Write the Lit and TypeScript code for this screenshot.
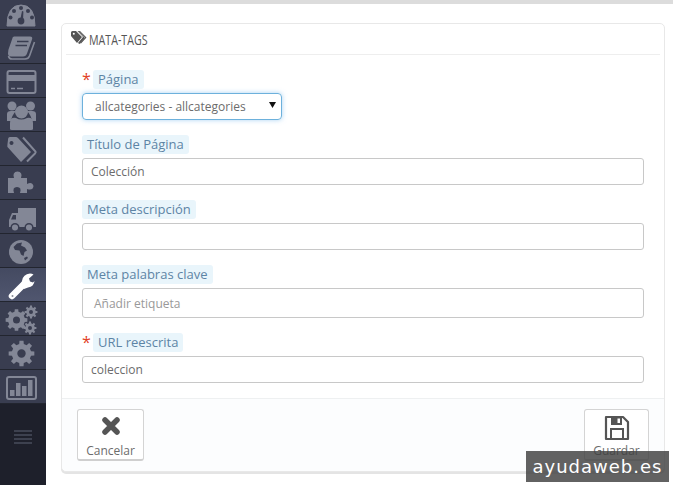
import { LitElement, html, css, svg, nothing } from "lit";
import { customElement } from "lit/decorators.js";

const IC = "#838796";
const BG = "#393d50";

function gear(cx: number, cy: number, ro: number, ri: number, hole: number, teeth = 8) {
  let d = "";
  const step = (Math.PI * 2) / teeth;
  for (let i = 0; i < teeth; i++) {
    const a = i * step - Math.PI / 2;
    const w1 = step * 0.2;
    const w2 = step * 0.3;
    const pts = [
      [ri, a - w2],
      [ro, a - w1],
      [ro, a + w1],
      [ri, a + w2],
    ];
    for (const [r, t] of pts) {
      d += `${d ? "L" : "M"}${(cx + r * Math.cos(t)).toFixed(2)} ${(cy + r * Math.sin(t)).toFixed(2)}`;
    }
  }
  d += "Z";
  d += `M${cx - hole} ${cy}a${hole} ${hole} 0 1 0 ${hole * 2} 0a${hole} ${hole} 0 1 0 ${-hole * 2} 0Z`;
  return d;
}

const icons = [
  svg`<path fill=${IC} d="M7 26Q7 5 21 5T35 26Z" stroke=${IC} stroke-linejoin="round"/>
    <g fill=${BG}><circle cx="14" cy="11" r="2"/><circle cx="21" cy="8" r="2"/><circle cx="28" cy="11" r="2"/><circle cx="10.5" cy="17.5" r="2"/><circle cx="32" cy="17.5" r="2"/><circle cx="21" cy="21" r="3.4"/><path d="M20 21L22 11L23.4 11.4L23 21Z"/></g>`,
  svg`<path fill=${IC} d="M14 36.500H30Q33 36.500 32 39.500L27 53.500Q26 56.500 23 56.500H11Q8 56.500 8 53.500Q8 50 9 48L12 39.500Q12.500 36.500 14 36.500Z"/>
    <path fill="none" stroke=${IC} stroke-width="1.600" d="M34.500 42L29.500 56Q28.500 59 25 59H12Q9 59 8.500 56"/>
    <path stroke=${BG} stroke-width="1.500" d="M17 41.500H28.500M15.500 45.500H27"/>`,
  svg`<rect x="7.500" y="71" width="28" height="22" rx="2" fill="none" stroke=${IC} stroke-width="2"/>
    <rect x="7.500" y="75" width="28" height="6" fill=${IC}/>
    <path stroke=${IC} stroke-width="1.500" d="M11 88.500H15M17 88.500H23"/>`,
  svg`<g fill=${IC}><circle cx="12" cy="106" r="4.500"/><circle cx="30.500" cy="106" r="4.500"/>
    <path d="M7 121V114Q7 111 11 111H16Q12 115 11 121Z"/><path d="M36 121V114Q36 111 32 111H27Q31 115 32 121Z"/>
    <circle cx="21.500" cy="112" r="6.500"/><path d="M10 129V123Q10 117 16 118Q21 121 27 118Q33 117 33 123V129Q33 130 31 130H12Q10 130 10 129Z"/></g>`,
  svg`<path fill-rule="evenodd" fill=${IC} d="M8 140Q7 147 7.500 147L21 162L31 152L18 138Q17 137 16 137H10Q8 137 8 140ZM11.500 141a2 2 0 1 0 .01 0Z"/>
    <path fill="none" stroke=${IC} stroke-width="2" d="M23 137.500L35.500 151.500Q36 152.500 35 153.500L27 161.500"/>`,
  svg`<g fill=${IC}><path d="M8 178H14Q12 172 17.500 171.500Q23 172 21 178H27V184Q32 181 33.500 186Q33 191 27 189V193H20Q22 187 17 187Q12 187 14 193H8Z"/></g>`,
  svg`<g fill=${IC}><rect x="18" y="208" width="18" height="19"/><path d="M9 220L12 213H18V227H9Z"/></g>
    <path fill=${BG} d="M11 219.500L13 215H16V219.500Z"/>
    <g fill=${IC} stroke=${BG} stroke-width="1.500"><circle cx="15" cy="227.500" r="3.800"/><circle cx="29" cy="227.500" r="3.800"/></g>`,
  svg`<circle cx="21" cy="252" r="12" fill=${IC}/>
    <path fill=${BG} d="M13.500 247L17 243.500L22 242.500L21 245.500L25 247.500L27 250.500L24.500 252L23.500 256L21 254.500L19.500 250.500L15 250ZM24 258L27 256.500L28 258L25 260.500Z"/>`,
  svg`<path fill="none" stroke="#fff" stroke-width="6.500" stroke-linecap="round" d="M12 296L24 284"/>
    <path fill="#fff" d="M33.500 274.500L29 278.500L30 281.500L33 282.500L34.500 281Q34 286.500 28 287.500L24 289L21 286L22 281Q23 274 30 273.500Q32 273.500 33.500 274.500Z"/>
    <circle cx="12.500" cy="296" r="1" fill=${BG} opacity=".6"/>`,
  svg`<path fill-rule="evenodd" fill=${IC} d=${gear(16.5, 320, 11, 8.500, 3.500)}/>
    <path fill-rule="evenodd" fill=${IC} d=${gear(31, 312, 6.500, 4.800, 2, 8)}/>
    <path fill-rule="evenodd" fill=${IC} d=${gear(30, 328, 6.500, 4.800, 2, 8)}/>`,
  svg`<path fill-rule="evenodd" fill=${IC} d=${gear(21.500, 353.500, 13, 9.800, 4.200)}/>`,
  svg`<rect x="7" y="377" width="29" height="22" rx="2" fill="none" stroke=${IC} stroke-width="2"/>
    <g fill=${IC}><rect x="10" y="390" width="4.500" height="6"/><rect x="16" y="383" width="4.500" height="13"/><rect x="22" y="386" width="4.500" height="10"/><rect x="28" y="380" width="4.500" height="16"/></g>`,
];

@customElement("app-root")
export class AppRoot extends LitElement {
  static styles = css`
    :host {
      display: flex;
      position: relative;
      width: 673px;
      height: 485px;
      overflow: hidden;
      font-family: "Open Sans", "Liberation Sans", sans-serif;
      font-size: 12px;
      background: #fff;
      color: #555;
    }
    .side {
      width: 46px;
      flex: none;
      display: flex;
      flex-direction: column;
      background: #1e202b;
      margin-top: -4px;
    }
    .row {
      height: 33px;
      background: #393d50;
      border-bottom: 1px solid #22252f;
    }
    .row svg { display: block; width: 46px; height: 33px; }
    .row.on { background: linear-gradient(#444a61, #50566f); }
    .menu { padding: 26px 14px 0; display: flex; flex-direction: column; gap: 2px; }
    .menu i { display: block; height: 2px; background: #3d414f; }
    .main { flex: 1; min-width: 0; }
    .top { height: 4px; background: #dcdcdc; }
    .panel {
      margin: 19px 8px 0 15px;
      height: 449px;
      box-sizing: border-box;
      border: 1px solid #e8e8e8;
      border-radius: 5px;
      box-shadow: 0 2px 0 #e4e4e4;
      display: flex;
      flex-direction: column;
      background: #fff;
    }
    .head {
      height: 30px;
      margin: 0 4px;
      border-bottom: 1px solid #eee;
      display: flex;
      align-items: center;
      gap: 2px;
      padding-left: 5px;
    }
    .head svg { display: block; margin-top: -3px; }
    .head span {
      display: inline-block;
      font-size: 15px;
      color: #555;
      transform: scaleX(0.71);
      transform-origin: left center;
      white-space: nowrap;
    }
    .form {
      flex: 1;
      padding: 15px 20px 0;
      display: flex;
      flex-direction: column;
    }
    .field { margin-bottom: 15px; }
    .lab {
      height: 19px;
      display: flex;
      align-items: center;
      margin-bottom: 4px;
    }
    .req { color: #e2411f; font-size: 16px; width: 11px; line-height: 19px; height: 19px; }
    .pill {
      display: inline-block;
      background: #e9f5fb;
      color: #5d84a5;
      font-size: 13px;
      line-height: 19px;
      padding: 0 5px;
      border-radius: 3px;
      white-space: nowrap;
    }
    .input {
      box-sizing: border-box;
      height: 27px;
      border: 1px solid #c8c8c8;
      border-radius: 3px;
      padding: 1px 8px 0;
      display: flex;
      align-items: center;
      color: #6c6c6c;
      font-size: 12px;
    }
    .input.tall { height: 30px; padding-left: 11px; color: #999; }
    .select {
      box-sizing: border-box;
      width: 200px;
      height: 27px;
      border: 1px solid #6db1dc;
      border-radius: 4px;
      box-shadow: 0 0 5px rgba(102, 175, 233, 0.55);
      padding: 1px 5px 0 12px;
      display: flex;
      align-items: center;
      justify-content: space-between;
      color: #6c6c6c;
      font-size: 12px;
    }
    .select svg { display: block; margin-top: -4px; }
    .foot {
      height: 74px;
      box-sizing: border-box;
      border-top: 1px solid #eef0f1;
      background: #fcfdfe;
      border-radius: 0 0 5px 5px;
      padding: 10px 15px 0;
      display: flex;
      justify-content: space-between;
      align-items: flex-start;
    }
    .btn {
      box-sizing: border-box;
      height: 52px;
      border: 1px solid #d4d4d4;
      border-bottom: 2px solid #cfcfcf;
      border-radius: 3px;
      background: #fff;
      display: flex;
      flex-direction: column;
      align-items: center;
      color: #6c6c6c;
      font-size: 12px;
      line-height: 14px;
    }
    .btn svg { display: block; }
    .cancel svg { margin: 6px 0 8px; }
    .save svg { margin: 5px 0 3px; }
    .cancel { width: 67px; }
    .save { width: 65px; }
    .mark {
      position: absolute;
      left: 526px;
      top: 451px;
      width: 143px;
      height: 31px;
      background: rgba(64, 64, 64, 0.82);
      color: #fff;
      font-family: "DejaVu Sans", sans-serif;
      font-size: 18px;
      letter-spacing: 1px;
      display: flex;
      align-items: center;
      justify-content: center;
      white-space: nowrap;
    }
  `;

  field(label: string, cls: string, value: string, req = false) {
    return html`<div class="field">
      <div class="lab">
        ${req ? html`<span class="req">*</span>` : nothing}
        <span class="pill">${label}</span>
      </div>
      ${cls === "select"
        ? html`<div class="select"><span>${value}</span>
            <svg width="7" height="6" viewBox="0 0 7 6"><path d="M0 0H7L3.500 6Z" fill="#111"/></svg></div>`
        : html`<div class="input ${cls}">${value}</div>`}
    </div>`;
  }

  render() {
    return html`
      <nav class="side">
        ${icons.map((ic, i) => {
          const y = -4 + 34 * i;
          return html`<div class="row ${i === 8 ? "on" : ""}">
            <svg viewBox="0 ${y} 46 33">${ic}</svg>
          </div>`;
        })}
        <div class="menu"><i></i><i></i><i></i><i></i></div>
      </nav>
      <div class="main">
        <div class="top"></div>
        <section class="panel">
          <div class="head">
            <svg width="16" height="13" viewBox="0 0 16 13">
              <path fill="#555" d="M0 1.500Q0 0 1.500 0H5L11 6L6 12L0 5ZM12 6L7 12L8.500 13L14 7L7.500 0H6.500Z" />
              <path fill="#555" d="M9 0L15.500 6.500L10 12.500L9 12L14 6.500L7.500 0Z"/>
              <circle cx="2.800" cy="2.800" r="1" fill="#fff"/>
            </svg>
            <span>MATA-TAGS</span>
          </div>
          <div class="form">
            ${this.field("Página", "select", "allcategories - allcategories", true)}
            ${this.field("Título de Página", "", "Colección")}
            ${this.field("Meta descripción", "", "")}
            ${this.field("Meta palabras clave", "tall", "Añadir etiqueta")}
            ${this.field("URL reescrita", "", "coleccion", true)}
          </div>
          <div class="foot">
            <div class="btn cancel">
              <svg width="20" height="20" viewBox="0 0 20 20">
                <path d="M4 4L16 16M16 4L4 16" stroke="#555" stroke-width="5.500" stroke-linecap="round"/>
              </svg>
              <span>Cancelar</span>
            </div>
            <div class="btn save">
              <svg width="26" height="26" viewBox="0 0 26 26">
                <path fill="none" stroke="#555" stroke-width="2.200" stroke-linejoin="round" d="M2 2H19L24 7V24H2Z"/>
                <rect x="7" y="14" width="12" height="10" fill="none" stroke="#555" stroke-width="2"/>
                <path fill="#555" d="M7 2H18V10H7Z"/><rect x="13.500" y="3.500" width="2.500" height="4.500" fill="#fff"/>
              </svg>
              <span>Guardar</span>
            </div>
          </div>
        </section>
      </div>
      <div class="mark">ayudaweb.es</div>
    `;
  }
}
